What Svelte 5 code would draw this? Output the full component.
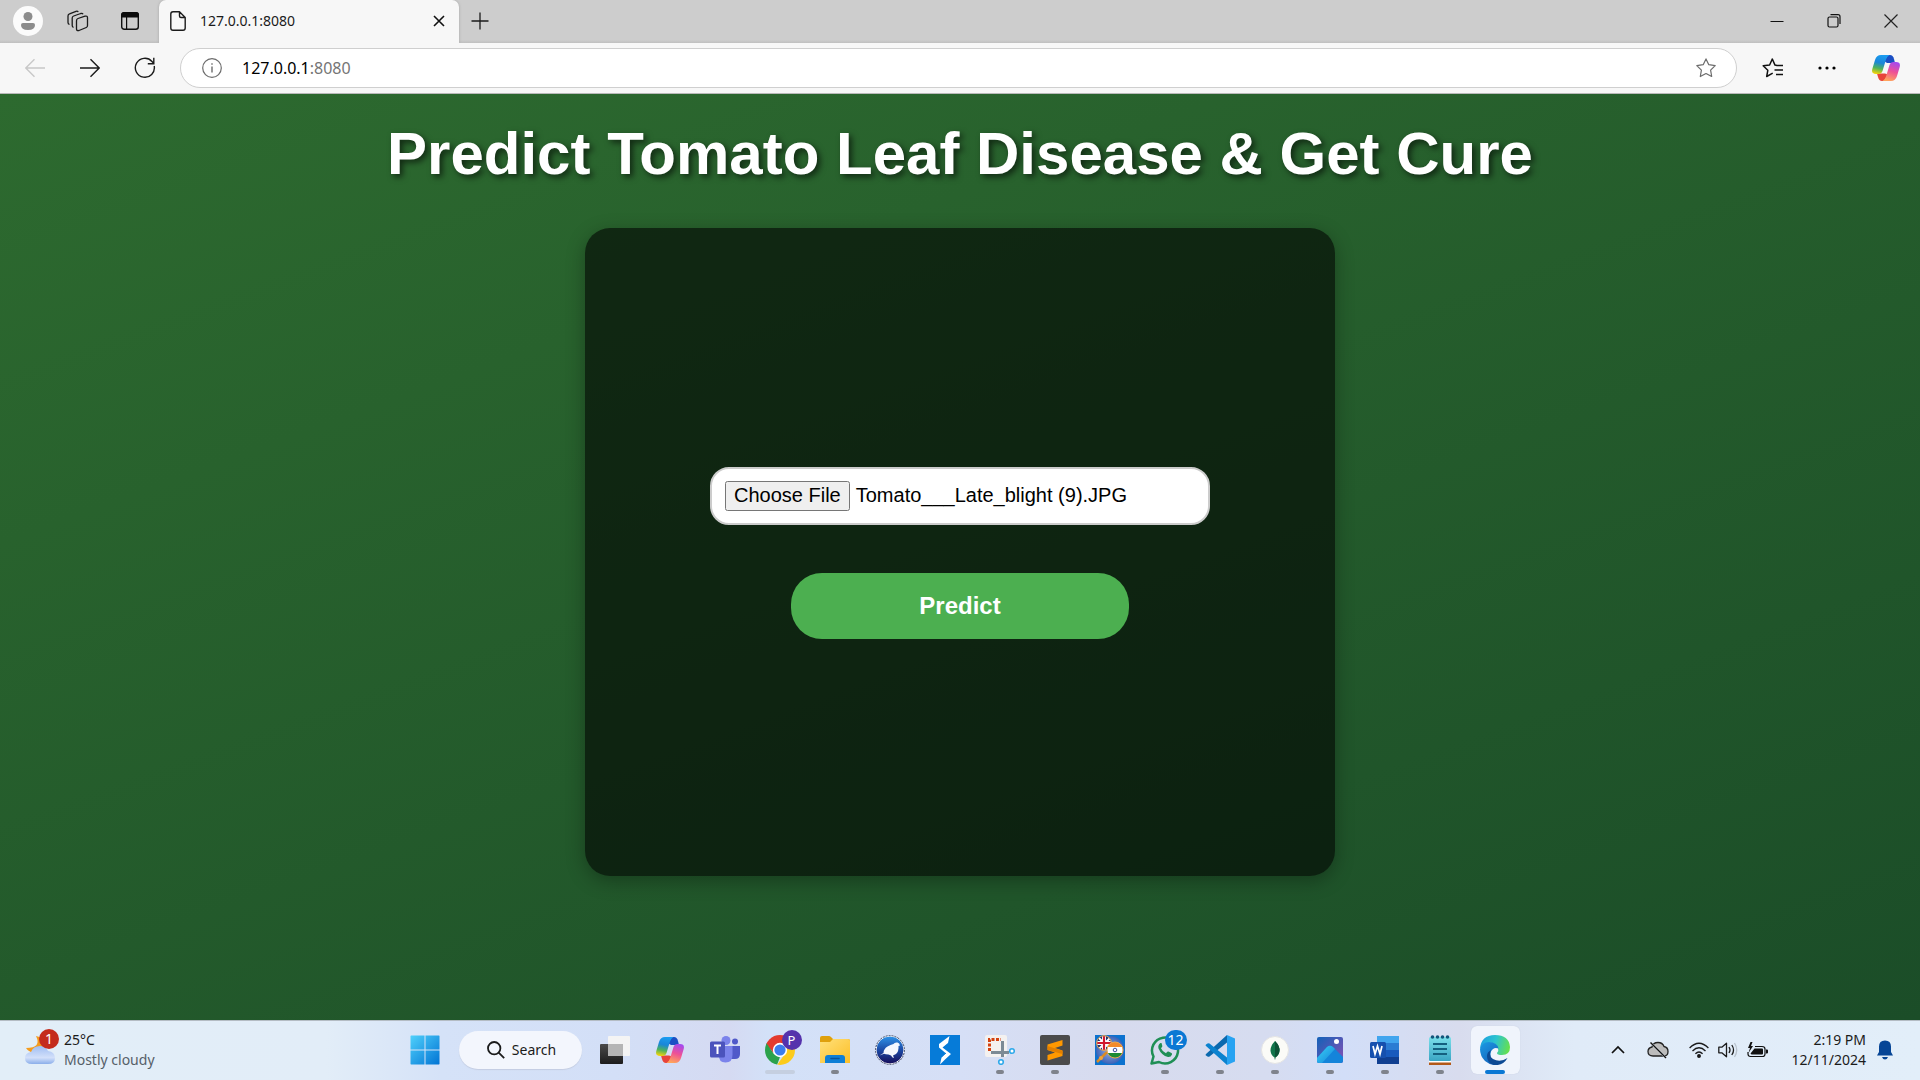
<script>
  import { onMount } from 'svelte';

  let fileInput;

  const apps = [
    { id: 'taskview', name: 'Task view' },
    { id: 'copilot', name: 'Copilot' },
    { id: 'teams', name: 'Teams' },
    { id: 'chrome', name: 'Chrome', mark: 'wide' },
    { id: 'explorer', name: 'File Explorer', mark: 'dot' },
    { id: 'weka', name: 'Weka' },
    { id: 'stream', name: 'Launcher' },
    { id: 'snip', name: 'Snipping Tool', mark: 'dot' },
    { id: 'sublime', name: 'Sublime Text', mark: 'dot' },
    { id: 'dict', name: 'Dictionary' },
    { id: 'whatsapp', name: 'WhatsApp', mark: 'dot' },
    { id: 'vscode', name: 'VS Code', mark: 'dot' },
    { id: 'mongo', name: 'MongoDB Compass', mark: 'dot' },
    { id: 'photos', name: 'Photos', mark: 'dot' },
    { id: 'word', name: 'Word', mark: 'dot' },
    { id: 'notepad', name: 'Notepad', mark: 'dot' },
    { id: 'edge', name: 'Edge', mark: 'active' }
  ];

  onMount(() => {
    const transfer = new DataTransfer();
    transfer.items.add(new File(['leaf'], 'Tomato___Late_blight (9).JPG', { type: 'image/jpeg' }));
    fileInput.files = transfer.files;
  });
</script>

<svg class="defs" aria-hidden="true">
  <defs>
    <linearGradient id="cpA" x1="0.5" y1="0" x2="0.3" y2="1"><stop offset="0" stop-color="#1b9cf0" /><stop offset=".4" stop-color="#1a86d8" /><stop offset=".7" stop-color="#4fb35a" /><stop offset="1" stop-color="#f6d30a" /></linearGradient>
    <linearGradient id="cpB" x1="0.7" y1="0" x2="0.4" y2="1"><stop offset="0" stop-color="#a44af0" /><stop offset=".5" stop-color="#ee5096" /><stop offset="1" stop-color="#ffa45c" /></linearGradient>
    <linearGradient id="winG" x1="0" y1="0" x2="1" y2="1"><stop offset="0" stop-color="#4fd0fb" /><stop offset="1" stop-color="#0274d4" /></linearGradient>
    <linearGradient id="darkG" x1="0" y1="0" x2="0" y2="1"><stop offset="0" stop-color="#4a4a4a" /><stop offset="1" stop-color="#1c1c1c" /></linearGradient>
    <linearGradient id="folderG" x1="0" y1="0" x2="1" y2="1"><stop offset="0" stop-color="#ffe07a" /><stop offset="1" stop-color="#fcbf27" /></linearGradient>
    <linearGradient id="wekaG" x1="0" y1="0" x2="0" y2="1"><stop offset="0" stop-color="#2f95ea" /><stop offset=".5" stop-color="#1c4aa6" /><stop offset="1" stop-color="#160c58" /></linearGradient>
    <linearGradient id="photoG" x1="0" y1="0" x2="1" y2="1"><stop offset="0" stop-color="#1262b8" /><stop offset="1" stop-color="#8b4fb4" /></linearGradient>
    <linearGradient id="hillG" x1="0" y1="0" x2="1" y2="1"><stop offset="0" stop-color="#3cd0f4" /><stop offset="1" stop-color="#1284dc" /></linearGradient>
    <linearGradient id="noteG" x1="0" y1="0" x2="0" y2="1"><stop offset="0" stop-color="#7be0ea" /><stop offset="1" stop-color="#3aa5c4" /></linearGradient>
    <linearGradient id="edgeA" x1="0" y1="0.3" x2="1" y2="0.5"><stop offset="0" stop-color="#1c9fe0" /><stop offset=".5" stop-color="#2cc4cf" /><stop offset="1" stop-color="#66e04e" /></linearGradient>
    <linearGradient id="edgeB" x1="0" y1="0" x2="0.6" y2="1"><stop offset="0" stop-color="#1b9be4" /><stop offset="1" stop-color="#1464bc" /></linearGradient>
    <linearGradient id="cloudG" x1="0" y1="0" x2="0" y2="1"><stop offset="0" stop-color="#9fbdf2" /><stop offset=".65" stop-color="#d3e0fa" /><stop offset="1" stop-color="#8aaeea" /></linearGradient>
    <radialGradient id="dictG"><stop offset="0" stop-color="#9fb4e4" /><stop offset="1" stop-color="#3a63b8" /></radialGradient>
    <clipPath id="chromeClip"><circle cx="15" cy="15" r="15" /></clipPath>
    <clipPath id="ukClip"><circle cx="9" cy="8" r="7" /></clipPath>
    <clipPath id="inClip"><circle cx="20" cy="15" r="8" /></clipPath>
  </defs>
</svg>

{#snippet copilot()}
  <svg width="28" height="26" viewBox="0 0 28 26">
    <path d="M16 0h2q3 0 4 4l1 4h-8l-3-2z" fill="#1b4fc4" />
    <path d="M12 26h-2q-3 0-4-4l-1-3.500h8l3 1z" fill="#e8443a" />
    <path d="M9 0h8.500q-2.500 1-3.500 4.500L10.500 16q-1 3-4 3H4q-5 0-3.700-5L3 5q1.500-5 6-5z" fill="url(#cpA)" />
    <path d="M19 26h-8.500q2.500-1 3.500-4.500L17.500 10q1-3 4-3H24q5 0 3.700 5L25 21q-1.500 5-6 5z" fill="url(#cpB)" />
  </svg>
{/snippet}

{#snippet icon(id)}
  {#if id === 'taskview'}
    <svg width="30" height="28" viewBox="0 0 30 28"><rect y="8" width="23" height="20" rx="1" fill="url(#darkG)" /><rect x="8" width="22" height="20" rx="1" fill="#f4f4f4" /><rect x="8" y="8" width="15" height="12" fill="#b5b5b5" /></svg>
  {:else if id === 'copilot'}
    {@render copilot()}
  {:else if id === 'teams'}
    <svg width="30" height="27" viewBox="0 0 30 27"><circle cx="25" cy="5.500" r="3" fill="#5059c9" /><path d="M20 10h10v8q0 5-5 5h-5z" fill="#5059c9" /><circle cx="16" cy="4.500" r="4.500" fill="#7b83eb" /><path d="M9 10h13.500v9q0 7.500-7 7.500T9 19z" fill="#7b83eb" /><rect y="5.500" width="15" height="16" rx="1.500" fill="#4b53bc" /><path d="M4 9.500h7M7.500 9.500v8.500" stroke="#fff" stroke-width="2" /></svg>
  {:else if id === 'chrome'}
    <svg width="30" height="30" viewBox="0 0 30 30"><g clip-path="url(#chromeClip)"><path d="M0 0h30v9H15L8.500 18 0 8z" fill="#e33b2e" /><path d="M0 6l8.700 12.700L15 22l-3 8H0z" fill="#2ba24c" /><path d="M15 8h15v22H12l8.500-12z" fill="#fccb1c" /></g><circle cx="15" cy="15" r="7.200" fill="#fff" /><circle cx="15" cy="15" r="5.600" fill="#3b7ded" /></svg>
  {:else if id === 'explorer'}
    <svg width="30" height="27" viewBox="0 0 30 27"><path d="M0 2q0-2 2-2h7q1 0 2 1l2 2h15q2 0 2 2v5H0z" fill="#dfa00c" /><path d="M0 6h10l3-3h15q2 0 2 2v22H0z" fill="url(#folderG)" /><path d="M5 27v-5q0-3 3-3h14q3 0 3 3v5z" fill="#0f7fd6" /><path d="M11 22.500h8" stroke="#0a539c" stroke-width="1.500" stroke-linecap="round" /></svg>
  {:else if id === 'weka'}
    <svg width="30" height="30" viewBox="0 0 30 30"><circle cx="15" cy="15" r="14" fill="url(#wekaG)" stroke="#fff" /><circle cx="15" cy="15" r="14.400" fill="none" stroke="#444b66" stroke-dasharray="2 1" /><path d="M4.500 20.500l4-2.500q0-4 4-6.500 3-2 6-2.500 1-2 4-1.500 2 .5 2.500 3l-1.500.5q.5 5-2.500 8l-3 1.500 1 2.500-1.500-.5-1.500-2-2.500-1q-3 0-4.500-.7z" fill="#f5f8ff" /></svg>
  {:else if id === 'stream'}
    <svg width="30" height="30" viewBox="0 0 30 30"><path d="M0 0h30v30H0z" fill="#067bd8" /><path d="M19.500 1L18 8l-5.500 4.500 8.500 6.500-6 5.500L10 29.500l1.500-7 4-4.500L9 12.500V9z" fill="#fff" /><path d="M18.500 8.500l-4.500 4M11.500 22l4.500-4" fill="none" stroke="#067bd8" stroke-width="1" /></svg>
  {:else if id === 'snip'}
    <svg width="30" height="30" viewBox="0 0 30 30"><rect width="22" height="22" rx="2" fill="#f4f1f0" /><path d="M4.500 16V4.500H16" fill="none" stroke="#d4410f" stroke-width="3" stroke-dasharray="3 1.500" /><path d="M17.500 6v16M6 17.500h18" stroke="#7d8a95" stroke-width="3" /><circle cx="27" cy="16" r="2.300" fill="#fff" stroke="#2fa9ea" stroke-width="1.600" /><circle cx="16" cy="27" r="2.300" fill="#fff" stroke="#2fa9ea" stroke-width="1.600" /></svg>
  {:else if id === 'sublime'}
    <svg width="30" height="30" viewBox="0 0 30 30"><rect width="30" height="30" rx="2" fill="#4b4b4b" /><path d="M22.500 5v5.500L15 13l7.500 2.500V21L7.500 25.500V20l7.500-2.500L7.500 15V9.500z" fill="#ff9800" /><path d="M7.500 15v-4l15 4.700V19z" fill="#e27f00" /></svg>
  {:else if id === 'dict'}
    <svg width="30" height="30" viewBox="0 0 30 30"><path d="M0 0h30v30H0z" fill="#0c72cf" /><circle cx="15" cy="15" r="14" fill="url(#dictG)" /><path d="M2 27l10-10" stroke="#d98b26" stroke-width="2.500" /><circle cx="6" cy="23" r="2" fill="#f0a53c" /><g clip-path="url(#ukClip)"><path d="M2 1h15v15H2z" fill="#22336f" /><path d="M2 1l15 15M17 1L2 16" stroke="#fff" stroke-width="2" /><path d="M9 0v16M1 8h16" stroke="#fff" stroke-width="4" /><path d="M9 0v16M1 8h16" stroke="#d0192e" stroke-width="2.200" /></g><circle cx="9" cy="8" r="7.400" fill="none" stroke="#e9a64d" /><g clip-path="url(#inClip)"><path d="M12 6h17v6H12z" fill="#f38a2a" /><path d="M12 12h17v6H12z" fill="#fff" /><path d="M12 18h17v6H12z" fill="#1d8a35" /></g><circle cx="20" cy="15" r="1.800" fill="none" stroke="#3e4b9d" /><circle cx="20" cy="15" r="8" fill="none" stroke="#e9a64d" /></svg>
  {:else if id === 'whatsapp'}
    <svg width="30" height="30" viewBox="0 0 30 30"><path d="M1.500 28.500l2-7A13 13 0 1 1 9 27z" fill="none" stroke="#1f8f55" stroke-width="2.500" stroke-linejoin="round" /><path d="M10.500 8q-3 2-2 5.500 3 7 9.500 8.500 3 .3 4-2.500.3-1-.5-1.500l-3-1.500q-1-.3-1.500.5l-1 1.200q-3.500-1.500-5-5l1-1.300q.6-.8.2-1.500L11.500 8z" fill="#1f8f55" /></svg>
  {:else if id === 'vscode'}
    <svg width="30" height="30" viewBox="0 0 30 30"><path d="M1 19q-1 1 0 1.500l1.500 1q1 .5 2 0L22 7.500V0z" fill="#0b69ae" /><path d="M1 11q-1-1 0-1.500l1.500-1q1-.5 2 0L22 22.500V30z" fill="#0b82cf" /><path d="M22 0l8 3.500v23L22 30z" fill="#27a3f2" /></svg>
  {:else if id === 'mongo'}
    <svg width="28" height="28" viewBox="0 0 28 28"><circle cx="14" cy="14" r="13.500" fill="#fbfbf7" stroke="#e4e4e4" /><path d="M14 5q5 5 4.500 10-.5 4-4 6.500l-.2 2h-.6l-.2-2Q10 19 9.500 15 9.200 10 14 5z" fill="#10744a" /><path d="M14 5q5 5 4.500 10-.5 4-4.500 6.500z" fill="#0b5135" /></svg>
  {:else if id === 'photos'}
    <svg width="26" height="26" viewBox="0 0 26 26"><rect width="26" height="26" rx="2" fill="url(#photoG)" /><path d="M0 21l10-11q3-2.500 6 0l10 10v4q0 2-2 2H2q-2 0-2-2z" fill="#1484da" /><path d="M0 21l10-11q3-2.500 6 0l2 2L5 26H2q-2 0-2-2z" fill="url(#hillG)" /><circle cx="19.500" cy="4.500" r="2.500" fill="#fff" /></svg>
  {:else if id === 'word'}
    <svg width="30" height="28" viewBox="0 0 30 28"><path d="M7 0h22v7H7z" fill="#41a5ee" /><path d="M7 7h22v7H7z" fill="#2b7cd3" /><path d="M7 14h22v7H7z" fill="#185abd" /><path d="M7 21h22v7H7z" fill="#103f91" /><rect y="6" width="16" height="16" rx="1.500" fill="#1650ae" /><path d="M3 10l2 8 2.500-8L10 18l2-8" fill="none" stroke="#fff" stroke-width="1.700" /></svg>
  {:else if id === 'notepad'}
    <svg width="22" height="30" viewBox="0 0 22 30"><path d="M0 27h22v3H0z" fill="#b2591a" /><path d="M0 26h22v1.500H0z" fill="#fff" /><rect y="2" width="22" height="24" rx="1.500" fill="url(#noteG)" /><g fill="#12567a"><circle cx="3.500" cy="2" r="1.800" /><circle cx="8.500" cy="2" r="1.800" /><circle cx="13.500" cy="2" r="1.800" /><circle cx="18.500" cy="2" r="1.800" /></g><path d="M4 9h14M4 14h14M4 19h14" stroke="#14607f" stroke-width="2" /></svg>
  {:else if id === 'edge'}
    <svg width="30" height="30" viewBox="0 0 30 30"><path d="M0 14Q1 0 15 0t15 12q0 8-8 8-5 0-5-2 2-2 1-5-3-6-10-5-5 1-8 6z" fill="url(#edgeA)" /><path d="M0 14Q2 7 9 7q8 0 9.500 6.500-5-2-7.500 3-2 7 4 11l2 2.300Q11 31 5 26q-5-5-5-12z" fill="url(#edgeB)" /><path d="M11 15q-3 6 2 9 7 4 14.500-1Q23 31 14 30q-7-2-7-9 0-4 4-6z" fill="#0d4a94" /></svg>
  {/if}
{/snippet}

<div class="desktop">
  <header class="browser">
    <div class="tabs">
      <button class="tool profile" aria-label="Profile">
        <svg width="30" height="30" viewBox="0 0 30 30"><circle cx="15" cy="15" r="15" fill="#fbfbfb" /><circle cx="15" cy="10.500" r="4.500" fill="#8c8c8c" /><path d="M8 19q0-2 2-2h10q2 0 2 2 0 5-7 5t-7-5z" fill="#8c8c8c" /></svg>
      </button>
      <button class="tool" aria-label="Workspaces">
        <svg width="22" height="22" viewBox="0 0 22 22" fill="none" stroke="#1b1b1b" stroke-width="1.300" stroke-linejoin="round"><path d="M11 8.500l7-2.300q2.500-.6 2.500 1.600v7.700q0 1.500-1.200 2L12 20.500q-2.500.6-2.500-1.600v-8.200q0-1.700 1.500-2.200z" /><path d="M6.500 17.500q-1.300-.5-1.300-2V8q0-1.500 1.500-2l7-2.500q1.800-.5 2.300.8" /><path d="M2.500 14.500q-1.500-.5-1.500-2V6q0-1.700 1.500-2.200l6.500-2.500q1.500-.5 2.300.5" /></svg>
      </button>
      <button class="tool" aria-label="Tab actions">
        <svg width="18" height="18" viewBox="0 0 18 18"><rect x=".7" y=".7" width="16.600" height="16.600" rx="2.500" fill="none" stroke="#111" stroke-width="1.400" /><path d="M0 5.500V3q0-3 3-3h12q3 0 3 3v2.500zM5 5h1.200v12H5z" fill="#0b0b0b" /></svg>
      </button>
      <div class="tab">
        <svg width="16" height="20" viewBox="0 0 16 20" fill="none" stroke="#1b1b1b" stroke-width="1.400" stroke-linejoin="round"><path d="M3 .8h6.500l5.700 5.700V17q0 2.200-2.200 2.200H3Q.8 19.200.8 17V3Q.8.8 3 .8zM9.500.8V5q0 1.500 1.500 1.500h4.200" /></svg>
        <span>127.0.0.1:8080</span>
        <button aria-label="Close tab"><svg width="12" height="12" viewBox="0 0 12 12"><path d="M1 1l10 10M11 1L1 11" stroke="#111" stroke-width="1.600" /></svg></button>
      </div>
      <button class="plus" aria-label="New tab"><svg width="18" height="18" viewBox="0 0 18 18"><path d="M9 .5v17M.5 9h17" stroke="#1b1b1b" stroke-width="1.300" /></svg></button>
      <div class="window">
        <button aria-label="Minimize"><svg width="14" height="14" viewBox="0 0 14 14"><path d="M.5 7.500h13" stroke="#111" /></svg></button>
        <button aria-label="Restore"><svg width="14" height="14" viewBox="0 0 14 14" fill="none" stroke="#111" stroke-width="1.200"><rect x="1" y="3" width="10" height="10" rx="1.500" /><path d="M3.500.7H11q2 0 2 2V10" /></svg></button>
        <button aria-label="Close"><svg width="14" height="14" viewBox="0 0 14 14"><path d="M.5.5l13 13M13.500.5l-13 13" stroke="#222" stroke-width="1.200" /></svg></button>
      </div>
    </div>
    <nav class="toolbar" aria-label="Browser">
      <button class="nav" aria-label="Back"><svg width="20" height="20" viewBox="0 0 20 20" fill="none" stroke="#c8c8c8" stroke-width="1.400"><path d="M20 10H1M9.500 1.200L.8 10l8.700 8.800" /></svg></button>
      <button class="nav" aria-label="Forward"><svg width="20" height="20" viewBox="0 0 20 20" fill="none" stroke="#1b1b1b" stroke-width="1.400"><path d="M0 10h19M10.500 1.200l8.700 8.800-8.700 8.800" /></svg></button>
      <button class="nav" aria-label="Refresh"><svg width="22" height="22" viewBox="0 0 22 22" fill="none" stroke="#1b1b1b" stroke-width="1.400"><path d="M20.200 9A9.500 9.500 0 1 1 18 4.500l1.800 2M19.800.8v6h-6" /></svg></button>
      <div class="address">
        <svg width="20" height="20" viewBox="0 0 20 20"><circle cx="10" cy="10" r="9.300" fill="none" stroke="#6c6c6c" stroke-width="1.200" /><path d="M10 8.500v6M10 5.200v1.600" stroke="#6c6c6c" stroke-width="1.400" /></svg>
        <a href="http://127.0.0.1:8080">127.0.0.1<span>:8080</span></a>
        <button aria-label="Add to favorites"><svg width="20" height="20" viewBox="0 0 20 20" fill="none" stroke="#6c6c6c" stroke-width="1.200" stroke-linejoin="round"><path d="M10 .9l2.800 5.800 6.400.9-4.600 4.500 1.100 6.400-5.700-3-5.700 3 1.100-6.400L.8 7.600l6.400-.9z" /></svg></button>
      </div>
      <button class="side" aria-label="Favorites"><svg width="22" height="20" viewBox="0 0 22 20" fill="none" stroke="#111" stroke-width="1.500" stroke-linejoin="round"><path d="M15 7.500l-2-.4L10.300 1 7.600 7l-6.400.8 4.600 4.500-1.100 6.200 6-3.300M14 7.500h7M12.500 12H21M14 16.500h7" /></svg></button>
      <button class="side" aria-label="Settings and more"><svg width="18" height="4" viewBox="0 0 18 4"><circle cx="2" cy="2" r="1.600" /><circle cx="9" cy="2" r="1.600" /><circle cx="16" cy="2" r="1.600" /></svg></button>
      <button class="side pilot" aria-label="Copilot">{@render copilot()}</button>
    </nav>
  </header>

  <main>
    <h1>Predict Tomato Leaf Disease &amp; Get Cure</h1>
    <form class="card" onsubmit={(event) => event.preventDefault()}>
      <input type="file" aria-label="Leaf image" bind:this={fileInput} />
      <button class="predict">Predict</button>
    </form>
  </main>

  <footer class="taskbar">
    <button class="weather">
      <span class="pic">
        <svg width="30" height="30" viewBox="0 0 30 30"><path d="M11 1q6 12-10 12 3 5 9 4l8-5V3z" fill="#f49c1e" /><path d="M7 29q-7 0-7-6 0-5 6-6 2-6 9-6 6 0 8 5 7 1 7 7 0 6-7 6z" fill="url(#cloudG)" /></svg>
        <b class="badge red">1</b>
      </span>
      <span class="lines"><span>25°C</span><span class="muted">Mostly cloudy</span></span>
    </button>
    <div class="apps">
      <button class="app" aria-label="Start"><svg width="30" height="30" viewBox="0 0 30 30"><path d="M1 .500h13.500V14.500H.500V1zM15.500.500H29l.5.500v13.500h-14zM.500 15.500h14v14H1l-.5-.5zM15.500 15.500h14V29l-.5.500H15.500z" fill="url(#winG)" /></svg></button>
      <button class="search"><svg width="18" height="18" viewBox="0 0 18 18" fill="none" stroke="#1b1b1b" stroke-width="1.800"><circle cx="7.200" cy="7.200" r="6.200" /><path d="M11.700 11.700l5.500 5.500" /></svg>Search</button>
      {#each apps as app}
        <button class={['app', app.mark]} aria-label={app.name}>
          {@render icon(app.id)}
          {#if app.id === 'chrome'}<b class="badge purple">P</b>{/if}
          {#if app.id === 'whatsapp'}<b class="badge blue">12</b>{/if}
        </button>
      {/each}
    </div>
    <div class="tray">
      <button aria-label="Show hidden icons"><svg width="14" height="9" viewBox="0 0 14 9"><path d="M1 8l6-6 6 6" fill="none" stroke="#111" stroke-width="1.700" /></svg></button>
      <button class="cloud" aria-label="OneDrive"><svg width="22" height="18" viewBox="0 0 22 18"><path d="M6 15q-5 0-5-4.500Q1 7 5 6q1-4.500 6-4.500 4.500 0 6 4 4 .8 4 5Q21 15 17 15z" fill="#bcbcbc" stroke="#222" stroke-width="1.300" /><path d="M4 2l15 15" stroke="#e8f0fa" stroke-width="2" /><path d="M3.500 1.500L19 17" stroke="#111" stroke-width="1.400" /></svg></button>
      <button class="status" aria-label="Network, sound and battery">
        <svg width="20" height="16" viewBox="0 0 20 16" fill="none" stroke="#1b1b1b" stroke-width="1.300"><path d="M.6 6q9.400-9.500 18.800 0M3.500 9q6.500-6.500 13 0M6.400 11.800q3.600-3.600 7.200 0" /><circle cx="10" cy="14" r="1.300" fill="#111" /></svg>
        <svg width="20" height="16" viewBox="0 0 20 16" fill="none" stroke="#1b1b1b" stroke-width="1.300"><path d="M.8 5.200h3L8.500 1.200v13.600L3.800 10.800h-3z" stroke-linejoin="round" /><path d="M11 5q2 3 0 6M13.800 3q3.500 5 0 10" /><path d="M16.500 1q4.500 7 0 14" stroke="#b9c2cc" /></svg>
        <svg width="21" height="16" viewBox="0 0 21 16"><path d="M8 4.500h7q3 0 3 2.500v5q0 2.500-2.500 2.500H3.500Q1 14.500 1 12v-2" fill="none" stroke="#111" stroke-width="1.200" /><path d="M7.500 6.500H15q1 0 1 1v4q0 1-1 1H4.500l-1-1zM19 7.500h1q1 0 1 1v2q0 1-1 1h-1z" fill="#111" /><path d="M3.500 0L1 6h2l-1.500 5 4.500-7H4L5.500 0z" fill="#111" /></svg>
      </button>
      <button class="lines clock"><span>2:19 PM</span><span>12/11/2024</span></button>
      <button aria-label="Notifications"><svg width="16" height="20" viewBox="0 0 16 20" fill="#064596"><path d="M8 .500q6 0 6 6V12l2 3.500H0L2 12V6.500q0-6 6-6zM5 17h6q-1 2.500-3 2.500T5 17z" /></svg></button>
    </div>
  </footer>
</div>

<style>
  :global(body) { margin: 0; }
  .defs { position: absolute; width: 0; height: 0; }
  .desktop { min-height: 100vh; display: flex; flex-direction: column; font-family: "Noto Sans", "Open Sans", sans-serif; font-size: 14px; color: #1b1b1b; }
  button { font: inherit; color: inherit; background: none; border: 0; padding: 0; display: flex; align-items: center; justify-content: center; }
  svg { display: block; flex: none; }

  .browser { background: #f7f7f7; border-bottom: 1px solid #b9b9b9; }
  .tabs { display: flex; height: 43px; background: linear-gradient(#cdcdcd 40px, #bfbfbf); }
  .tool { width: 52px; padding-bottom: 1px; }
  .tool.profile { width: 52px; padding: 0 0 2px 4px; }
  .tab { width: 300px; box-sizing: border-box; padding: 0 14px 2px 11px; margin-left: 3px; display: flex; align-items: center; gap: 14px; background: #f7f7f7; border-radius: 7px 7px 0 0; box-shadow: 0 0 3px #a5a5a5; clip-path: inset(0 -3px 0 -3px); }
  .tab span { flex: 1; }
  .plus { width: 42px; padding-bottom: 2px; }
  .window { margin-left: auto; display: flex; padding-right: 1px; }
  .window button { width: 57px; padding-bottom: 1px; }
  .toolbar { height: 50px; display: flex; align-items: center; padding: 0 6px 0 7px; }
  .nav { width: 55px; height: 40px; }
  .address { flex: 1; box-sizing: border-box; height: 40px; margin: 0 9px 0 8px; padding: 0 20px 0 21px; display: flex; align-items: center; gap: 20px; background: #fff; border: 1px solid #cfcfcf; border-radius: 20px; }
  .address a { flex: 1; font-size: 16px; color: #000; text-decoration: none; }
  .address a span { color: #757575; }
  .side { width: 54px; height: 40px; }
  .side.pilot { width: 60px; padding-left: 4px; box-sizing: border-box; }

  main { flex: 1; box-sizing: border-box; padding: 25px 16px 0; background: linear-gradient(160deg, #2d6a2f, #1b4d28); display: flex; flex-direction: column; align-items: center; gap: 40px; font-family: "Liberation Sans", Arial, sans-serif; }
  h1 { margin: 0; font-size: 60px; line-height: 69px; text-align: center; color: #fff; text-shadow: 3px 3px 6px rgba(0, 0, 0, .6); }
  .card { width: 100%; max-width: 750px; min-height: 60vh; box-sizing: border-box; padding-top: 1px; display: flex; flex-direction: column; align-items: center; justify-content: center; gap: 48px; background: rgba(0, 0, 0, .6); border-radius: 25px; box-shadow: 0 5px 19px rgba(0, 0, 0, .3); }
  .card input { width: 500px; max-width: 90%; box-sizing: border-box; padding: 12px 13px; border: 2px solid #ccc; border-radius: 19px; background: #fff; font: 20px "Liberation Sans", Arial, sans-serif; color: #000; }
  .card input::file-selector-button { padding: 1px 7px 2px; margin-right: 6px; }
  .predict { width: 45%; padding: 19px 0; border-radius: 31px; background: #4caf50; color: #fff; font-size: 24px; line-height: 28px; font-weight: bold; }

  .taskbar { height: 60px; box-sizing: border-box; padding-bottom: 2px; border-top: 1px solid #b4bcc4; display: grid; grid-template-columns: 1fr auto 1fr; background: linear-gradient(90deg, #e2eef8 0, #e2edf8 17%, #d5e2f8 23%, #d3dff7 32%, #d5daf2 38%, #d3e1f8 40%, #d6dff6 50%, #d7dbee 58%, #d6dcf0 66%, #d2def8 70%, #d8dcee 76%, #e0ebf8 82%, #e2eef9); }
  .weather { justify-self: start; padding-left: 25px; gap: 9px; }
  .pic { position: relative; display: block; }
  .lines { display: flex; flex-direction: column; align-items: flex-start; line-height: 20px; }
  .muted { color: #566069; }
  .badge { position: absolute; width: 20px; height: 20px; border-radius: 10px; font-size: 14px; line-height: 20px; font-weight: 400; text-align: center; color: #fff; }
  .red { left: 14px; top: -6px; background: #c42b1c; }
  .apps { display: flex; align-items: center; }
  .app { position: relative; width: 55px; height: 57px; }
  .app::after { content: ""; position: absolute; left: 50%; bottom: 4px; width: 0; height: 4px; border-radius: 2px; transform: translateX(-50%); background: #7f838c; }
  .app.dot::after { width: 8px; }
  .app.wide::after { width: 30px; background: #c5cfe0; }
  .app.active { width: 49px; height: 48px; margin: 0 3px; border-radius: 6px; background: #f0f4fc; box-shadow: 0 0 1px #bcc5d8; }
  .app.active::after { width: 20px; bottom: 0; background: #0a78d4; }
  .purple { left: 29px; top: 9px; background: #5532ac; font-size: 13px; }
  .blue { left: 27px; top: 9px; width: 22px; background: #0a78d4; }
  .search { width: 123px; height: 38px; margin: 0 6px; padding-left: 3px; gap: 7px; border-radius: 19px; background: #f3f6fd; box-shadow: 0 1px 1px #c4cde2; }
  .tray { justify-self: end; display: flex; align-items: center; padding-right: 27px; }
  .cloud { margin: 0 20px 0 22px; }
  .status { gap: 9px; }
  .clock { align-items: flex-end; margin: 0 11px 0 24px; }
</style>
